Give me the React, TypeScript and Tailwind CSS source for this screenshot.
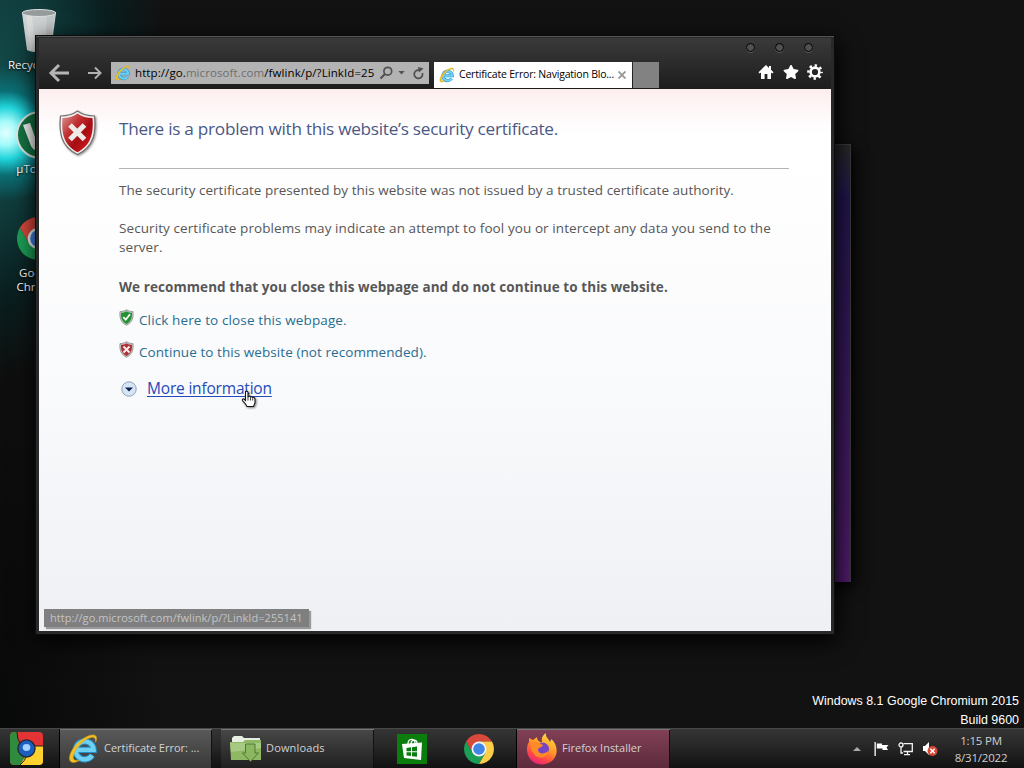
import type { ReactNode } from "react";
import { FaStar } from "react-icons/fa";

function IeIcon({ className }: { className?: string }) {
  return (
    <svg viewBox="0 0 32 32" className={className} fill="none">
      <path d="M9 17.500H26.500A9.300 9.300 0 1 0 25 23" stroke="#2391c9" strokeWidth="6.400" />
      <path d="M9 17.500H26.500A9.300 9.300 0 1 0 25 23" stroke="#6fd0f5" strokeWidth="4.400" />
      <path
        d="M28.500 9.500C32 1.500 26 0 18 4.500C8 10 -0.500 22 2 28.500C3.500 31.500 8 30.500 12 28C7 29 5 27.500 5.500 24C7 17 14 9 20 6C26 3 29 4 28.500 9.500Z"
        fill="#f0c024"
        stroke="#d9a414"
        strokeWidth=".6"
      />
    </svg>
  );
}

function ChromeIcon({ className }: { className?: string }) {
  return (
    <svg viewBox="0 0 48 48" className={className}>
      <path d="M24 12H44.780A24 24 0 0 0 3.220 12L13.610 30 24 24Z" fill="#d8483b" />
      <path d="M3.220 12A24 24 0 0 0 24 48L34.390 30 24 24 13.610 30Z" fill="#1b9e55" />
      <path d="M24 12H44.780A24 24 0 0 1 24 48L34.390 30 24 24Z" fill="#fccd48" />
      <circle cx="24" cy="24" r="12" fill="#f4f4f4" />
      <circle cx="24" cy="24" r="9.300" fill="#4285e8" />
    </svg>
  );
}

function ShieldX() {
  return (
    <svg viewBox="0 0 40 48" className="h-12 w-10 drop-shadow-[1px_1px_1px_rgba(0,0,0,0.45)]">
      <defs>
        <linearGradient id="shieldRed" x1="0" y1="0" x2="1" y2="1">
          <stop offset="0" stopColor="#d99a98" />
          <stop offset="0.35" stopColor="#c13032" />
          <stop offset="0.6" stopColor="#a50d12" />
          <stop offset="1" stopColor="#e02225" />
        </linearGradient>
      </defs>
      <path
        d="M19.500 2C23.500 5 30 7 36.500 7C38 22 37 37 19.500 45.500C2 37 1 22 2.500 7C9 7 15.500 5 19.500 2Z"
        fill="#f1efef"
        stroke="#77706f"
        strokeWidth="1.200"
      />
      <path
        d="M19.500 4.500C23.500 7.500 29 9 34.500 9C35.500 22 34.500 35.500 19.500 43.200C4.500 35.500 3.500 22 4.500 9C10 9 15.500 7.500 19.500 4.500Z"
        fill="url(#shieldRed)"
      />
      <path d="M12 16L26.500 30.500M26.500 16L12 30.500" stroke="#eeeae5" strokeWidth="5.200" />
    </svg>
  );
}

function SmallShield({ ok }: { ok?: boolean }) {
  return (
    <svg viewBox="0 0 15 17" className="h-[17px] w-[15px] shrink-0">
      <path
        d="M7.500 .7C9.500 2 11.500 2.600 14 2.600C14.500 8.500 13.500 13.500 7.500 16.200C1.500 13.500 .5 8.500 1 2.600C3.500 2.600 5.500 2 7.500 .7Z"
        fill="#c5c9c6"
        stroke="#858b87"
        strokeWidth=".8"
      />
      <path
        d="M7.500 2.200C9.200 3.300 11 3.800 12.900 3.800C13.300 8.500 12.300 12.600 7.500 14.900C2.700 12.600 1.700 8.500 2.100 3.800C4 3.800 5.800 3.300 7.500 2.200Z"
        fill={ok ? "#249134" : "#b32f35"}
      />
      {ok ? (
        <path d="M4.300 8.200L6.700 10.700L11 5.300" fill="none" stroke="#fff" strokeWidth="1.800" />
      ) : (
        <path d="M4.500 5.500L10.500 11.500M10.500 5.500L4.500 11.500" stroke="#f5eeee" strokeWidth="1.900" />
      )}
    </svg>
  );
}

function DesktopIcon({ className, icon, label }: { className: string; icon: ReactNode; label: string }) {
  return (
    <div className={`absolute flex flex-col items-center ${className}`}>
      {icon}
      <span className="whitespace-pre text-center font-['Open_Sans',sans-serif] text-[11.500px] leading-[14px] text-white [text-shadow:0_1px_2px_#000]">
        {label}
      </span>
    </div>
  );
}

function Wallpaper() {
  return (
    <>
      <div className="absolute inset-0 bg-[#121212]" />
      <div className="absolute inset-0 bg-[linear-gradient(75deg,#070808_0,#0b0b0b_60px,transparent_180px)]" />
      <div className="absolute inset-0 bg-[radial-gradient(ellipse_200px_290px_at_-30px_90px,#14504f_0,#103b3b_45%,#0a1f20_72%,transparent_100%)]" />
      <div className="absolute inset-0 bg-[radial-gradient(circle_at_6px_133px,#e5ffff_0,#a4fbfb_12px,#20d4db_26px,#0b6f75_42px,transparent_68px)]" />
    </>
  );
}

function DesktopIcons() {
  return (
    <>
      <DesktopIcon
        className="left-[3px] top-[7px] w-[70px]"
        label="Recycle Bin"
        icon={
          <svg viewBox="0 0 40 48" className="mb-[3px] ml-[2px] h-12 w-10">
            <path d="M3 6L8 43C13 46 27 46 32 43L37 6Z" fill="#d0d3d3" />
            <path d="M7 7L11 43L16 45L13 7Z" fill="#dcdede" />
            <path d="M28 7L26 44L30 43L36 7Z" fill="#c4c7c7" />
            <ellipse cx="20" cy="6" rx="17" ry="3.500" fill="#969c9c" stroke="#dde0e0" />
          </svg>
        }
      />
      <DesktopIcon
        className="left-[5px] top-[111px] w-[70px]"
        label="µTorrent"
        icon={
          <svg viewBox="0 0 48 48" className="mb-[3px] size-12">
            <circle cx="24" cy="24" r="23" fill="#157344" stroke="#dfe9e4" strokeWidth="2" />
            <path d="M7 14L14 12L20 29C24 35 30 33 28 25L24 11L32 10L40 34L33 37L31 33C29 41 18 42 15 35Z" fill="#f2f5f2" />
          </svg>
        }
      />
      <DesktopIcon
        className="left-[3px] top-[217px] w-[70px]"
        label={"Google\nChrome"}
        icon={<ChromeIcon className="mb-[6px] size-[43px]" />}
      />
    </>
  );
}

function AddressBar() {
  return (
    <div className="flex h-[22px] w-[318px] items-center bg-[#b3b3b3] pl-1 font-['Open_Sans',sans-serif] text-[11.500px] text-black">
      <IeIcon className="mr-1 size-4" />
      <span className="w-[241px] whitespace-nowrap tracking-[0.095px]">
        http://go.<span className="text-[#6f6f6f]">microsoft.com</span>/fwlink/p/?LinkId=25
      </span>
      <svg viewBox="0 0 14 14" className="ml-[3px] size-[14px]" fill="none" stroke="#505050" strokeWidth="1.700">
        <circle cx="8.800" cy="5.200" r="3.900" />
        <path d="M6 8L1.500 12.500" strokeWidth="2.200" />
      </svg>
      <svg viewBox="0 0 8 5" className="ml-[5px] h-[4px] w-[7px]">
        <path d="M0 0H8L4 4.500Z" fill="#555" />
      </svg>
      <svg viewBox="0 0 14 14" className="ml-[7px] size-[13px]" fill="none">
        <path d="M7.500 3.300A4.500 4.500 0 1 0 11.200 6.500" stroke="#505050" strokeWidth="1.900" />
        <path d="M6.500 0L12.500 1.500L7.500 6Z" fill="#505050" />
      </svg>
    </div>
  );
}

function TitleBar() {
  return (
    <div className="flex h-[51px] flex-col bg-linear-to-b from-[#3a3a3a] to-[#1d1d1d]">
      <div className="flex h-[19px] justify-end gap-5 pr-[18px] pt-[5px]">
        {[0, 1, 2].map((n) => (
          <span
            key={n}
            className="size-[9px] rounded-full border border-black bg-[#505050] shadow-[0_1px_0_#555]"
          />
        ))}
      </div>
      <div className="flex h-8 items-start pl-[9px]">
        <svg viewBox="0 0 22 20" className="mt-[6px] h-5 w-[22px]" fill="none" stroke="#b5b5b5" strokeWidth="3">
          <path d="M21 10H3M11 2L3 10L11 18" />
        </svg>
        <svg viewBox="0 0 14 14" className="ml-[18px] mt-[9px] size-[14px]" fill="none" stroke="#b0b0b0" strokeWidth="2">
          <path d="M0 7H12.500M7 1.500L12.500 7L7 12.500" />
        </svg>
        <div className="ml-[9px] mt-[5px]">
          <AddressBar />
        </div>
        <div className="ml-[5px] mt-[5px] flex h-[26px] w-[198px] items-center bg-white pl-[5px] font-['Open_Sans',sans-serif] text-[10.500px] text-black">
          <IeIcon className="mr-1 size-4" />
          <span className="w-[156px] whitespace-nowrap tracking-[-0.200px]">Certificate Error: Navigation Blo...</span>
          <svg viewBox="0 0 8 8" className="ml-[3px] size-2" stroke="#999" strokeWidth="1.900">
            <path d="M.5 .5L7.500 7.500M7.500 .5L.5 7.500" />
          </svg>
        </div>
        <div className="ml-px mt-[5px] h-[26px] w-[26px] bg-[#828282]" />
        <div className="ml-[99px] mt-[7px] flex items-center gap-[8.500px]">
          <svg viewBox="0 0 16 16" className="size-4" fill="#fff">
            <path d="M8 1L.5 8.200L1.700 9.500L3 8.400V15H6.600V10H9.400V15H13V8.400L14.300 9.500L15.500 8.200L13 5.800V2H11V3.900Z" />
          </svg>
          <FaStar className="size-4 text-white" />
          <svg viewBox="0 0 16 16" className="size-4" fill="none" stroke="#fff">
            <circle cx="8" cy="8" r="4.400" strokeWidth="2.600" />
            <circle cx="8" cy="8" r="6.500" strokeWidth="2.600" strokeDasharray="2.400 2.705" strokeDashoffset="1.200" />
          </svg>
        </div>
      </div>
    </div>
  );
}

function ErrorPage() {
  return (
    <div className="flex h-[542px] flex-col bg-[linear-gradient(180deg,#fdeeee_0,#fefafa_28px,#ffffff_45px,#fefefe_120px,#f8f9fb_330px,#eff0f4_542px)] font-['Open_Sans',sans-serif] text-[13.500px] text-[#575757]">
      <div className="flex pl-[19px] pt-5">
        <ShieldX />
        <div className="ml-[21px] flex w-[670px] flex-col whitespace-nowrap">
          <h1 className="h-[60px] border-b border-[#b4b4b4] pt-2 text-[17.200px] leading-6 tracking-[-0.270px] text-[#4a5985]">
            There is a problem with this website’s security certificate.
          </h1>
          <p className="mt-3 leading-[19px] tracking-[0.030px]">
            The security certificate presented by this website was not issued by a trusted certificate authority.
          </p>
          <p className="mt-[19px] leading-[19px] tracking-[0.085px]">
            Security certificate problems may indicate an attempt to fool you or intercept any data you send to the
            <br />
            server.
          </p>
          <p className="mt-[21px] font-bold leading-[19px] tracking-[0.070px]">
            We recommend that you close this webpage and do not continue to this website.
          </p>
          <div className="mt-3 flex text-[#286d91]">
            <SmallShield ok />
            <span className="ml-[5px] mt-[2px] leading-[19px] tracking-[0.120px]">Click here to close this webpage.</span>
          </div>
          <div className="mt-[11px] flex text-[#286d91]">
            <SmallShield />
            <span className="ml-[5px] mt-[2px] leading-[19px] tracking-[0.070px]">
              Continue to this website (not recommended).
            </span>
          </div>
          <div className="mt-4 flex items-center pl-[2px]">
            <svg viewBox="0 0 16 16" className="size-4">
              <circle cx="8" cy="8" r="7.200" fill="#d5e6f7" stroke="#91a3bb" />
              <path d="M4 6.500H12L8 10.500Z" fill="#10214c" />
            </svg>
            <a
              href="#"
              className="-mt-px ml-[10px] text-[15.500px] leading-[22px] tracking-[-0.190px] text-[#2749b8] underline underline-offset-2"
            >
              More information
            </a>
          </div>
        </div>
      </div>
      <div className="mb-1 ml-[5px] mt-auto h-[18px] w-[265px] whitespace-nowrap bg-[#7f7f7f] pl-[6px] text-[11px] leading-[17px] tracking-[0.050px] text-[#c4c4c4] shadow-[2px_2px_1px_#999]">
        http://go.microsoft.com/fwlink/p/?LinkId=255141
      </div>
    </div>
  );
}

function HandCursor() {
  return (
    <svg viewBox="0 0 16 18" className="absolute left-[241px] top-[390px] z-10 h-[18px] w-4 drop-shadow-[1px_1px_1px_rgba(0,0,0,0.5)]">
      <path
        d="M4.500 1.500Q6.500 .5 7 2.500V6.500Q8.500 5.500 9.500 7Q11 6.200 11.700 7.700Q14 7 14 9.500V13L12.500 16.500H6L4.500 14L1.500 10.500Q1 8.500 3 9L4.500 10.500Z"
        fill="#fff"
        stroke="#151515"
        strokeWidth="1.100"
      />
      <path d="M7 7V10.500M9.500 7.500V10.500M11.700 8.500V10.500" stroke="#222" strokeWidth=".9" />
    </svg>
  );
}

function StartButton() {
  return (
    <svg viewBox="0 0 33 33" className="ml-[10px] size-[33px]">
      <rect width="33" height="33" rx="4" fill="#e23434" />
      <path d="M0 4Q0 0 4 0H7L9 12L17 22L10 33H4Q0 33 0 29Z" fill="#318b3c" />
      <path d="M10 33L17 22L22 14H33V29Q33 33 29 33Z" fill="#ffd22f" />
      <path d="M7 0Q7 7 10 11M33 14H22M10 33Q15 29 17 23" stroke="#2a1a1a" strokeWidth="1" fill="none" />
      <circle cx="16.500" cy="16.500" r="9.200" fill="#22262e" />
      <circle cx="16.500" cy="16.500" r="7.900" fill="#1a5fc0" />
      <ellipse cx="16.500" cy="15.500" rx="3.800" ry="3.400" fill="#a5d2ff" />
    </svg>
  );
}

function FolderIcon() {
  return (
    <svg viewBox="0 0 32 28" className="h-7 w-8">
      <path d="M2 3L4 1H12L14 3H30V12H2Z" fill="#e9eee2" />
      <path d="M0 7H13L15 5H31V25H1Z" fill="#8fb864" />
      <path d="M0 8H31V13L1 17Z" fill="#a8c984" />
      <path d="M15.500 9H25V18H28.500L20.500 26.500L12.500 18H15.500Z" fill="#8cb761" stroke="#50792f" />
    </svg>
  );
}

function FirefoxIcon() {
  return (
    <svg viewBox="0 0 32 32" className="size-8">
      <defs>
        <linearGradient id="fox" x1="0.8" y1="0" x2="0.3" y2="1">
          <stop offset="0" stopColor="#ffe44b" />
          <stop offset="0.45" stopColor="#ff9a26" />
          <stop offset="0.75" stopColor="#ff4b45" />
          <stop offset="1" stopColor="#e9217c" />
        </linearGradient>
      </defs>
      <path
        d="M20 0C19 4 23 6 24 9L25.500 6C31 11 33 21 27 27C21 33 10 33 5 27C0 22 0 13 3 9L3 5L7 7L11 4C11 7 13 9 16 9C15 5 17 2 20 0Z"
        fill="url(#fox)"
      />
      <circle cx="16.500" cy="16" r="6.500" fill="#7445c5" />
      <path d="M5 10C9 7 13 10 17 12C16 15 12 14 12 17C13 22 19 21 22 18C22 25 12 27 8 21C5 18 5 14 5 10Z" fill="#ff8a28" />
    </svg>
  );
}

function Task({ className, icon, label }: { className: string; icon: ReactNode; label: string }) {
  return (
    <div className={`flex h-full items-center shadow-[inset_0_1px_0_#777,inset_-1px_0_0_#111] ${className}`}>
      {icon}
      <span className="whitespace-nowrap font-['Open_Sans',sans-serif] text-[11px] text-[#d2d2d2]">{label}</span>
    </div>
  );
}

function Taskbar() {
  return (
    <div className="absolute inset-x-0 bottom-0 flex h-10 items-center border-t border-[#484848] bg-linear-to-b from-[#353535] via-[#252525] to-[#111]">
      <StartButton />
      <div className="ml-4 h-full">
        <Task
          className="w-[153px] gap-[5px] border-l border-black bg-linear-to-b from-[#5a5a5a] to-[#393939] pl-[8px] tracking-[-0.020px]"
          icon={<IeIcon className="size-[31px]" />}
          label="Certificate Error: ..."
        />
      </div>
      <div className="ml-[9px] h-full">
        <Task
          className="w-[153px] gap-1 bg-linear-to-b from-[#484848] to-[#202020] pl-[9px] tracking-[0.150px]"
          icon={<FolderIcon />}
          label="Downloads"
        />
      </div>
      <div className="ml-[23px] flex size-[30px] items-center justify-center bg-[#0b7d0d]">
        <svg viewBox="0 0 24 24" className="size-6">
          <path d="M8 7C8 1 15 1 15 6M11 7C11 2 17 2 17 6" fill="none" stroke="#fff" strokeWidth="1.300" />
          <path d="M2 7L22 5.500L21 23L4 21Z" fill="#fff" />
          <path d="M6.500 11L11 10.300V14.200H6.500ZM12 10.200L17 9.500V14.200H12ZM6.500 15.200H11V19L6.500 18.500ZM12 15.200H17V19.800L12 19.200Z" fill="#0b7d0d" />
        </svg>
      </div>
      <ChromeIcon className="ml-[37px] size-[30px]" />
      <div className="ml-[22px] h-full">
        <Task
          className="w-[154px] gap-1 border-l border-black bg-linear-to-b from-[#824056] to-[#5d2b3c] pl-[9px]"
          icon={<FirefoxIcon />}
          label="Firefox Installer"
        />
      </div>
      <div className="ml-auto flex items-center">
        <svg viewBox="0 0 8 4" className="mt-px h-1 w-2">
          <path d="M0 4L4 0L8 4Z" fill="#aaa" />
        </svg>
        <svg viewBox="0 0 15 14" className="ml-[13px] h-[14px] w-[15px]">
          <path d="M.5 0H1.800V14H.5ZM2.800 1.500H8V3H14.500L12.500 5.500L14 8H8.500V6.500H2.800Z" fill="#fff" />
        </svg>
        <svg viewBox="0 0 15 14" className="ml-[9px] h-[14px] w-[15px]" fill="none" stroke="#f2f2f2" strokeWidth="1.300">
          <path d="M5.500 1.700H14.300V9.500H5.500M3 5V11H5M9.500 9.500V12.500M6 12.700H12" />
          <circle cx="3" cy="3" r="2" />
        </svg>
        <svg viewBox="0 0 16 16" className="ml-[9px] size-4">
          <path d="M1 5H3L7 1V14L3 10H1Z" fill="#fff" />
          <circle cx="10.500" cy="10" r="5" fill="#d84636" />
          <path d="M8.300 7.800L12.700 12.200M12.700 7.800L8.300 12.200" stroke="#fff" strokeWidth="1.500" />
        </svg>
        <div className="ml-2 w-[70px] text-center font-['Open_Sans',sans-serif] text-[11.500px] leading-[17px] tracking-[-0.2px] text-[#cfcfcf]">
          1:15 PM
          <br />
          8/31/2022
        </div>
        <div className="w-2" />
      </div>
    </div>
  );
}

export default function App() {
  return (
    <div className="relative h-[768px] w-[1024px] overflow-hidden bg-[#121212]">
      <Wallpaper />
      <DesktopIcons />

      {/* window behind the browser */}
      <div className="absolute left-[800px] top-[144px] h-[438px] w-[51px] border-r border-t border-[#3c3c3c] bg-linear-to-b from-[#292929] via-[#231550] via-12% to-[#541c70] shadow-[3px_5px_14px_#000]" />

      <div className="absolute left-[35px] top-[35px] w-[800px] border border-[#0c0c0c] bg-[#292929] shadow-[2px_6px_22px_#000]">
        <div className="border-t border-[#545454] px-[3px] pb-[3px] pt-px">
          <TitleBar />
          <ErrorPage />
        </div>
      </div>
      <HandCursor />

      <div className="absolute bottom-[38px] right-[5px] text-right font-['Liberation_Sans',Arial,sans-serif] text-[12.450px] leading-[19px] text-white">
        Windows 8.1 Google Chromium 2015
        <br />
        Build 9600
      </div>
      <Taskbar />
    </div>
  );
}
